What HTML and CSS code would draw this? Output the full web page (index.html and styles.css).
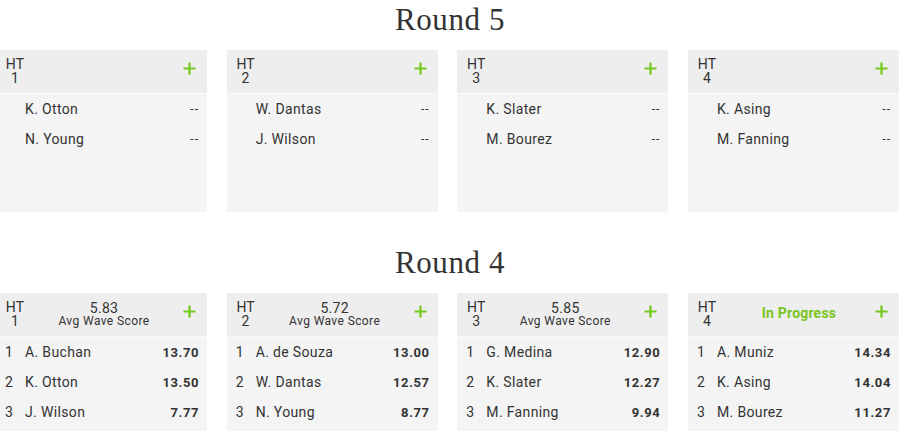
FILE: index.html
```html
<!DOCTYPE html>
<html>
<head>
<meta charset="utf-8">
<link rel="stylesheet" href="styles.css">
</head>
<body>
<section class="round">
  <h2 class="round-title">Round 5</h2>
  <div class="heats">
    <div class="heat">
      <div class="heat-head"><div class="ht"><div>HT</div><div>1</div></div><div class="mid"></div><svg class="plus" viewBox="0 0 14 14"><path d="M7 0.5V13.5M0.5 7H13.5"/></svg></div>
      <div class="heat-body tall">
        <div class="row"><span class="rank"></span><span class="name">K. Otton</span><span class="score light">--</span></div>
        <div class="row"><span class="rank"></span><span class="name">N. Young</span><span class="score light">--</span></div>
      </div>
    </div>
    <div class="heat">
      <div class="heat-head"><div class="ht"><div>HT</div><div>2</div></div><div class="mid"></div><svg class="plus" viewBox="0 0 14 14"><path d="M7 0.5V13.5M0.5 7H13.5"/></svg></div>
      <div class="heat-body tall">
        <div class="row"><span class="rank"></span><span class="name">W. Dantas</span><span class="score light">--</span></div>
        <div class="row"><span class="rank"></span><span class="name">J. Wilson</span><span class="score light">--</span></div>
      </div>
    </div>
    <div class="heat">
      <div class="heat-head"><div class="ht"><div>HT</div><div>3</div></div><div class="mid"></div><svg class="plus" viewBox="0 0 14 14"><path d="M7 0.5V13.5M0.5 7H13.5"/></svg></div>
      <div class="heat-body tall">
        <div class="row"><span class="rank"></span><span class="name">K. Slater</span><span class="score light">--</span></div>
        <div class="row"><span class="rank"></span><span class="name">M. Bourez</span><span class="score light">--</span></div>
      </div>
    </div>
    <div class="heat">
      <div class="heat-head"><div class="ht"><div>HT</div><div>4</div></div><div class="mid"></div><svg class="plus" viewBox="0 0 14 14"><path d="M7 0.5V13.5M0.5 7H13.5"/></svg></div>
      <div class="heat-body tall">
        <div class="row"><span class="rank"></span><span class="name">K. Asing</span><span class="score light">--</span></div>
        <div class="row"><span class="rank"></span><span class="name">M. Fanning</span><span class="score light">--</span></div>
      </div>
    </div>
  </div>
</section>

<section class="round second">
  <h2 class="round-title">Round 4</h2>
  <div class="heats">
    <div class="heat">
      <div class="heat-head"><div class="ht"><div>HT</div><div>1</div></div><div class="mid"><div class="avg">5.83</div><div class="avg-label">Avg Wave Score</div></div><svg class="plus" viewBox="0 0 14 14"><path d="M7 0.5V13.5M0.5 7H13.5"/></svg></div>
      <div class="heat-body">
        <div class="row"><span class="rank">1</span><span class="name">A. Buchan</span><span class="score">13.70</span></div>
        <div class="row"><span class="rank">2</span><span class="name">K. Otton</span><span class="score">13.50</span></div>
        <div class="row"><span class="rank">3</span><span class="name">J. Wilson</span><span class="score">7.77</span></div>
      </div>
    </div>
    <div class="heat">
      <div class="heat-head"><div class="ht"><div>HT</div><div>2</div></div><div class="mid"><div class="avg">5.72</div><div class="avg-label">Avg Wave Score</div></div><svg class="plus" viewBox="0 0 14 14"><path d="M7 0.5V13.5M0.5 7H13.5"/></svg></div>
      <div class="heat-body">
        <div class="row"><span class="rank">1</span><span class="name">A. de Souza</span><span class="score">13.00</span></div>
        <div class="row"><span class="rank">2</span><span class="name">W. Dantas</span><span class="score">12.57</span></div>
        <div class="row"><span class="rank">3</span><span class="name">N. Young</span><span class="score">8.77</span></div>
      </div>
    </div>
    <div class="heat">
      <div class="heat-head"><div class="ht"><div>HT</div><div>3</div></div><div class="mid"><div class="avg">5.85</div><div class="avg-label">Avg Wave Score</div></div><svg class="plus" viewBox="0 0 14 14"><path d="M7 0.5V13.5M0.5 7H13.5"/></svg></div>
      <div class="heat-body">
        <div class="row"><span class="rank">1</span><span class="name">G. Medina</span><span class="score">12.90</span></div>
        <div class="row"><span class="rank">2</span><span class="name">K. Slater</span><span class="score">12.27</span></div>
        <div class="row"><span class="rank">3</span><span class="name">M. Fanning</span><span class="score">9.94</span></div>
      </div>
    </div>
    <div class="heat">
      <div class="heat-head"><div class="ht"><div>HT</div><div>4</div></div><div class="mid"><div class="progress">In Progress</div></div><svg class="plus" viewBox="0 0 14 14"><path d="M7 0.5V13.5M0.5 7H13.5"/></svg></div>
      <div class="heat-body">
        <div class="row"><span class="rank">1</span><span class="name">A. Muniz</span><span class="score">14.34</span></div>
        <div class="row"><span class="rank">2</span><span class="name">K. Asing</span><span class="score">14.04</span></div>
        <div class="row"><span class="rank">3</span><span class="name">M. Bourez</span><span class="score">11.27</span></div>
      </div>
    </div>
  </div>
</section>
</body>
</html>
```

FILE: styles.css
```css
html, body {
  margin: 0;
  padding: 0;
  background: #ffffff;
  overflow: hidden;
}
body {
  font-family: Roboto, "Liberation Sans", sans-serif;
  color: #333333;
  width: 900px;
  height: 431px;
}
.round-title {
  margin: 0 0 10px 0;
  height: 40px;
  line-height: 40px;
  text-align: center;
  font-family: "Liberation Serif", "DejaVu Serif", serif;
  font-weight: normal;
  font-size: 31px;
  letter-spacing: 0.6px;
  color: #333333;
}
.second {
  margin-top: 31px;
}
.heats {
  display: grid;
  grid-template-columns: repeat(4, 211px);
  column-gap: 19.67px;
  margin-left: -4px;
  width: 903px;
}
.heat {
  display: flex;
  flex-direction: column;
}
.heat-head {
  height: 43px;
  background: #eeeeee;
  display: flex;
  align-items: center;
  padding: 0 11px 0 9px;
  border-bottom: 1px solid #fafafa;
}
.ht {
  font-size: 14px;
  line-height: 14px;
  text-align: center;
  width: 20px;
  letter-spacing: 0.2px;
  margin-top: -1px;
}
.mid {
  flex: 1;
  text-align: center;
}
.avg {
  font-size: 14px;
  line-height: 13px;
  letter-spacing: 0.3px;
}
.avg-label {
  font-size: 12px;
  line-height: 13px;
  letter-spacing: 0.4px;
}
.progress {
  color: #7ac520;
  font-weight: bold;
  font-size: 14px;
  letter-spacing: 0.2px;
  padding-left: 6px;
  margin-top: -4px;
}
.plus {
  width: 13px;
  height: 13px;
  margin-top: -7px;
}
.plus path {
  stroke: #76c81c;
  stroke-width: 2.4;
  fill: none;
}
.heat-body {
  background: #f4f4f4;
  height: 100px;
}
.heat-body.tall {
  height: 118px;
}
.row {
  height: 30px;
  display: flex;
  align-items: center;
  padding: 0 8px 0 9px;
  font-size: 14px;
  letter-spacing: 0.35px;
}
.rank {
  width: 20px;
}
.name {
  flex: 1;
}
.score {
  font-weight: bold;
  font-size: 13px;
  letter-spacing: 0.6px;
}
.score.light {
  font-weight: normal;
  font-size: 12px;
  letter-spacing: 1px;
}
```
